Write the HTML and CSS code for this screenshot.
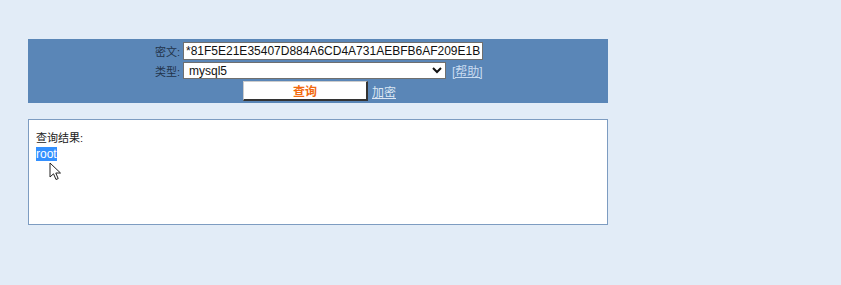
FILE: index.html
```html
<!DOCTYPE html>
<html lang="zh-CN">
<head>
	<meta charset="utf-8">
	<title>md5 解密</title>
	<link rel="stylesheet" href="styles.css">
</head>
<body>
	<div class="wrap">
		<form class="query-panel">
			<div class="row">
				<label class="lbl">密文:</label>
				<input class="txt" type="text" value="*81F5E21E35407D884A6CD4A731AEBFB6AF209E1B">
			</div>
			<div class="row">
				<label class="lbl">类型:</label>
				<select class="sel">
					<option>mysql5</option>
				</select>
				<a class="help" href="#">[帮助]</a>
			</div>
			<div class="row btn-row">
				<button class="btn" type="button">查询</button>
				<a class="link" href="#">加密</a>
			</div>
		</form>

		<div class="result">
			<p class="res-title">查询结果:</p>
			<span class="res-val">root</span>
			<!-- mouse pointer over the selected text -->
			<svg class="cursor" width="13" height="20" viewBox="0 0 13 20">
				<path d="M1 1 L1 15 L4.5 11.8 L7 17.5 L9.2 16.6 L6.8 11 L11.5 11 Z" fill="#fff" stroke="#222" stroke-width="1"/>
			</svg>
		</div>
	</div>
</body>
</html>
```

FILE: styles.css
```css
body {
	margin: 0;
	padding: 0;
	background-color: #e2ecf7;
	font-family: "Liberation Sans", "Noto Sans CJK SC", sans-serif;
	font-size: 12px;
}

.wrap {
	width: 580px;
	padding: 39px 0 0 28px;
}

.query-panel {
	background-color: #5a86b7;
	height: 64px;
	padding-top: 3px;
	box-sizing: border-box;
	margin: 0;
}

.row {
	display: flex;
	align-items: center;
	margin-bottom: 2px;
}

.lbl {
	width: 152px;
	text-align: right;
	color: #22334a;
	font-size: 11px;
	margin-right: 3px;
}

.txt {
	width: 300px;
	height: 18px;
	box-sizing: border-box;
	border: 1px solid #6f6f6f;
	padding: 0 2px;
	font-family: "Liberation Sans", sans-serif;
	font-size: 12px;
	color: #111;
}

.sel {
	width: 263px;
	height: 17px;
	box-sizing: border-box;
	border: 1px solid #6f6f6f;
	border-radius: 0;
	padding: 0 1px;
	font-family: "Liberation Sans", sans-serif;
	font-size: 12px;
	background: #fff;
	color: #111;
}

.help {
	margin-left: 6px;
	color: #c9dcf1;
	font-size: 12px;
}

.btn-row {
	padding-left: 215px;
	margin-bottom: 0;
}

.btn {
	width: 125px;
	height: 20px;
	background: #fff;
	border: 1px solid #ccc;
	border-right: 2px solid #333;
	border-bottom: 2px solid #333;
	color: #f26a0f;
	font-weight: bold;
	font-size: 12px;
	font-family: "Noto Sans CJK SC", sans-serif;
	padding: 0;
}

.link {
	margin-left: 4px;
	color: #dbe6f3;
	font-size: 12px;
}

.result {
	position: relative;
	margin-top: 16px;
	height: 106px;
	background: #fff;
	border: 1px solid #7d9cc1;
	box-sizing: border-box;
	padding: 11px 7px;
	color: #222;
}

.res-title {
	margin: 0 0 2px;
	font-size: 11px;
	line-height: 14px;
}

.res-val {
	display: inline-block;
	background: #3390ff;
	color: #fff;
	font-size: 12px;
	line-height: 14px;
}

.cursor {
	position: absolute;
	left: 20px;
	top: 42px;
}
```
